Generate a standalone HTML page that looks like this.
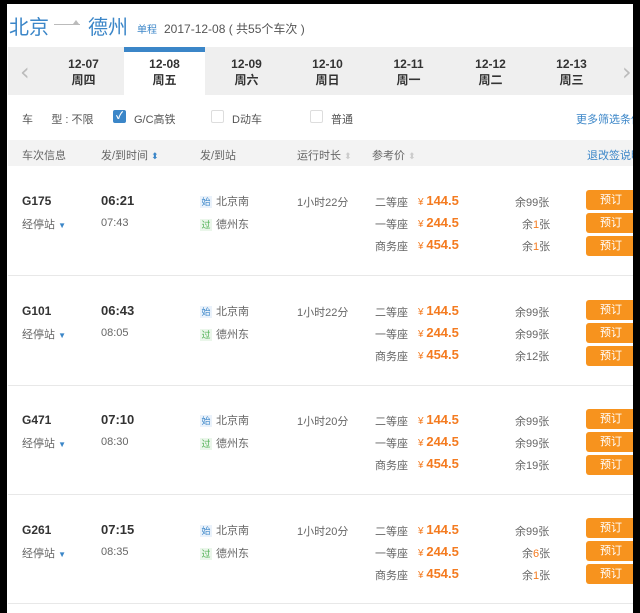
<!DOCTYPE html>
<html><head><meta charset="utf-8"><style>
*{margin:0;padding:0;box-sizing:border-box}
body{width:640px;height:613px;overflow:hidden;background:#fff;position:relative;font-family:"Liberation Sans","Noto Sans CJK SC",sans-serif;font-size:11px;color:#333}
.a{position:absolute;white-space:nowrap}
.bl{background:#000;position:absolute}
.tab{position:absolute;top:47px;width:81px;height:48px;text-align:center;font-size:12px;font-weight:bold;color:#333;line-height:16px;padding-top:9px}
.btn{position:absolute;left:586px;width:50px;height:20px;background:#f7931e;color:#fff;border-radius:3px;font-size:11px;line-height:20px;text-align:center}
.pr{color:#f47b20;font-weight:bold;font-size:13px}
.pr small{font-size:10px;font-weight:normal}
.g{color:#666}
.tag{display:inline-block;font-size:9px;width:12px;height:12px;line-height:12px;text-align:center;margin-right:4px}
.sep{position:absolute;left:8px;width:625px;height:1px;background:#e8e8e8}
.s{font-size:9px}
</style></head><body>
<div class="a" style="left:9px;top:11px;font-size:20px;color:#3b86c8">北京</div>
<div class="a" style="left:54px;top:24px;width:26px;height:1px;background:#bbb"></div>
<div class="a" style="left:73px;top:20px;width:0;height:0;border-left:3px solid transparent;border-right:3px solid transparent;border-bottom:4px solid #bbb"></div>
<div class="a" style="left:88px;top:11px;font-size:20px;color:#3b86c8">德州</div>
<div class="a" style="left:137px;top:21px;font-size:10px;color:#3b86c8">单程</div>
<div class="a" style="left:164px;top:20px;font-size:12px;color:#555">2017-12-08 ( 共55个车次 )</div>

<div class="a" style="left:8px;top:47px;width:625px;height:48px;background:#efefef"></div>
<div class="a" style="left:20px;top:58px;font-size:24px;color:#bbb;font-family:'DejaVu Sans'">‹</div>
<div class="a" style="left:622px;top:58px;font-size:24px;color:#bbb;font-family:'DejaVu Sans'">›</div>
<div class="tab" style="left:43px">12-07<br>周四</div>
<div class="tab" style="left:124px;background:#fff;border-top:5px solid #3b86c8;padding-top:4px">12-08<br>周五</div>
<div class="tab" style="left:206px">12-09<br>周六</div>
<div class="tab" style="left:287px">12-10<br>周日</div>
<div class="tab" style="left:368px">12-11<br>周一</div>
<div class="tab" style="left:450px">12-12<br>周二</div>
<div class="tab" style="left:531px">12-13<br>周三</div>

<div class="a" style="left:22px;top:111px;color:#555">车&nbsp;&nbsp;&nbsp;&nbsp;&nbsp;&nbsp;型 : 不限</div>
<div class="a" style="left:113px;top:110px;width:13px;height:13px;background:#3b86c8;border-radius:2px;color:#fff;font-size:10px;text-align:center;line-height:13px;font-weight:bold">✓</div>
<div class="a" style="left:134px;top:111px;color:#555">G/C高铁</div>
<div class="a" style="left:211px;top:110px;width:13px;height:13px;border:1px solid #ddd;border-radius:2px"></div>
<div class="a" style="left:232px;top:111px;color:#555">D动车</div>
<div class="a" style="left:310px;top:110px;width:13px;height:13px;border:1px solid #ddd;border-radius:2px"></div>
<div class="a" style="left:331px;top:111px;color:#555">普通</div>
<div class="a" style="left:576px;top:111px;color:#3b86c8">更多筛选条件</div>

<div class="a" style="left:8px;top:140px;width:625px;height:26px;background:#f3f3f3"></div>
<div class="a g" style="left:22px;top:147px">车次信息</div>
<div class="a g" style="left:101px;top:147px">发/到时间 <span class="s" style="color:#3b86c8">⬍</span></div>
<div class="a g" style="left:200px;top:147px">发/到站</div>
<div class="a g" style="left:297px;top:147px">运行时长 <span class="s" style="color:#ccc">⬍</span></div>
<div class="a g" style="left:372px;top:147px">参考价 <span class="s" style="color:#ccc">⬍</span></div>
<div class="a" style="left:587px;top:147px;color:#3b86c8">退改签说明</div>

<div class="a" style="left:22px;top:194px;font-weight:bold;font-size:12px">G175</div>
<div class="a g" style="left:22px;top:216px">经停站 <span style="color:#3b86c8;font-size:8px">▼</span></div>
<div class="a" style="left:101px;top:193px;font-weight:bold;font-size:13px">06:21</div>
<div class="a g" style="left:101px;top:217px">07:43</div>
<div class="a g" style="left:200px;top:193px"><span class="tag" style="color:#3b86c8;background:#eaf2fb">始</span>北京南</div>
<div class="a g" style="left:200px;top:216px"><span class="tag" style="color:#4caf50;background:#eaf6ea">过</span>德州东</div>
<div class="a g" style="left:297px;top:194px">1小时22分</div>
<div class="a g" style="left:375px;top:194px">二等座</div><div class="a pr" style="left:418px;top:193px"><small>¥ </small>144.5</div><div class="a g" style="left:515px;top:194px">余99张</div>
<div class="a g" style="left:375px;top:216px">一等座</div><div class="a pr" style="left:418px;top:215px"><small>¥ </small>244.5</div><div class="a g" style="left:522px;top:216px">余<span style="color:#f47b20">1</span>张</div>
<div class="a g" style="left:375px;top:238px">商务座</div><div class="a pr" style="left:418px;top:237px"><small>¥ </small>454.5</div><div class="a g" style="left:522px;top:238px">余<span style="color:#f47b20">1</span>张</div>
<div class="btn" style="top:190px">预订</div><div class="btn" style="top:213px">预订</div><div class="btn" style="top:236px">预订</div>
<div class="sep" style="top:275px"></div>

<div class="a" style="left:22px;top:304px;font-weight:bold;font-size:12px">G101</div>
<div class="a g" style="left:22px;top:326px">经停站 <span style="color:#3b86c8;font-size:8px">▼</span></div>
<div class="a" style="left:101px;top:303px;font-weight:bold;font-size:13px">06:43</div>
<div class="a g" style="left:101px;top:327px">08:05</div>
<div class="a g" style="left:200px;top:303px"><span class="tag" style="color:#3b86c8;background:#eaf2fb">始</span>北京南</div>
<div class="a g" style="left:200px;top:326px"><span class="tag" style="color:#4caf50;background:#eaf6ea">过</span>德州东</div>
<div class="a g" style="left:297px;top:304px">1小时22分</div>
<div class="a g" style="left:375px;top:304px">二等座</div><div class="a pr" style="left:418px;top:303px"><small>¥ </small>144.5</div><div class="a g" style="left:515px;top:304px">余99张</div>
<div class="a g" style="left:375px;top:326px">一等座</div><div class="a pr" style="left:418px;top:325px"><small>¥ </small>244.5</div><div class="a g" style="left:515px;top:326px">余99张</div>
<div class="a g" style="left:375px;top:348px">商务座</div><div class="a pr" style="left:418px;top:347px"><small>¥ </small>454.5</div><div class="a g" style="left:515px;top:348px">余12张</div>
<div class="btn" style="top:300px">预订</div><div class="btn" style="top:323px">预订</div><div class="btn" style="top:346px">预订</div>
<div class="sep" style="top:385px"></div>

<div class="a" style="left:22px;top:413px;font-weight:bold;font-size:12px">G471</div>
<div class="a g" style="left:22px;top:435px">经停站 <span style="color:#3b86c8;font-size:8px">▼</span></div>
<div class="a" style="left:101px;top:412px;font-weight:bold;font-size:13px">07:10</div>
<div class="a g" style="left:101px;top:436px">08:30</div>
<div class="a g" style="left:200px;top:412px"><span class="tag" style="color:#3b86c8;background:#eaf2fb">始</span>北京南</div>
<div class="a g" style="left:200px;top:435px"><span class="tag" style="color:#4caf50;background:#eaf6ea">过</span>德州东</div>
<div class="a g" style="left:297px;top:413px">1小时20分</div>
<div class="a g" style="left:375px;top:413px">二等座</div><div class="a pr" style="left:418px;top:412px"><small>¥ </small>144.5</div><div class="a g" style="left:515px;top:413px">余99张</div>
<div class="a g" style="left:375px;top:435px">一等座</div><div class="a pr" style="left:418px;top:434px"><small>¥ </small>244.5</div><div class="a g" style="left:515px;top:435px">余99张</div>
<div class="a g" style="left:375px;top:457px">商务座</div><div class="a pr" style="left:418px;top:456px"><small>¥ </small>454.5</div><div class="a g" style="left:515px;top:457px">余19张</div>
<div class="btn" style="top:409px">预订</div><div class="btn" style="top:432px">预订</div><div class="btn" style="top:455px">预订</div>
<div class="sep" style="top:494px"></div>

<div class="a" style="left:22px;top:523px;font-weight:bold;font-size:12px">G261</div>
<div class="a g" style="left:22px;top:545px">经停站 <span style="color:#3b86c8;font-size:8px">▼</span></div>
<div class="a" style="left:101px;top:522px;font-weight:bold;font-size:13px">07:15</div>
<div class="a g" style="left:101px;top:546px">08:35</div>
<div class="a g" style="left:200px;top:522px"><span class="tag" style="color:#3b86c8;background:#eaf2fb">始</span>北京南</div>
<div class="a g" style="left:200px;top:545px"><span class="tag" style="color:#4caf50;background:#eaf6ea">过</span>德州东</div>
<div class="a g" style="left:297px;top:523px">1小时20分</div>
<div class="a g" style="left:375px;top:523px">二等座</div><div class="a pr" style="left:418px;top:522px"><small>¥ </small>144.5</div><div class="a g" style="left:515px;top:523px">余99张</div>
<div class="a g" style="left:375px;top:545px">一等座</div><div class="a pr" style="left:418px;top:544px"><small>¥ </small>244.5</div><div class="a g" style="left:522px;top:545px">余<span style="color:#f47b20">6</span>张</div>
<div class="a g" style="left:375px;top:567px">商务座</div><div class="a pr" style="left:418px;top:566px"><small>¥ </small>454.5</div><div class="a g" style="left:522px;top:567px">余<span style="color:#f47b20">1</span>张</div>
<div class="btn" style="top:518px">预订</div><div class="btn" style="top:541px">预订</div><div class="btn" style="top:564px">预订</div>
<div class="sep" style="top:603px"></div>

<div class="bl" style="left:0;top:0;width:7px;height:613px"></div>
<div class="bl" style="left:0;top:0;width:640px;height:4px"></div>
<div class="bl" style="left:633px;top:0;width:7px;height:613px"></div>
</body></html>
